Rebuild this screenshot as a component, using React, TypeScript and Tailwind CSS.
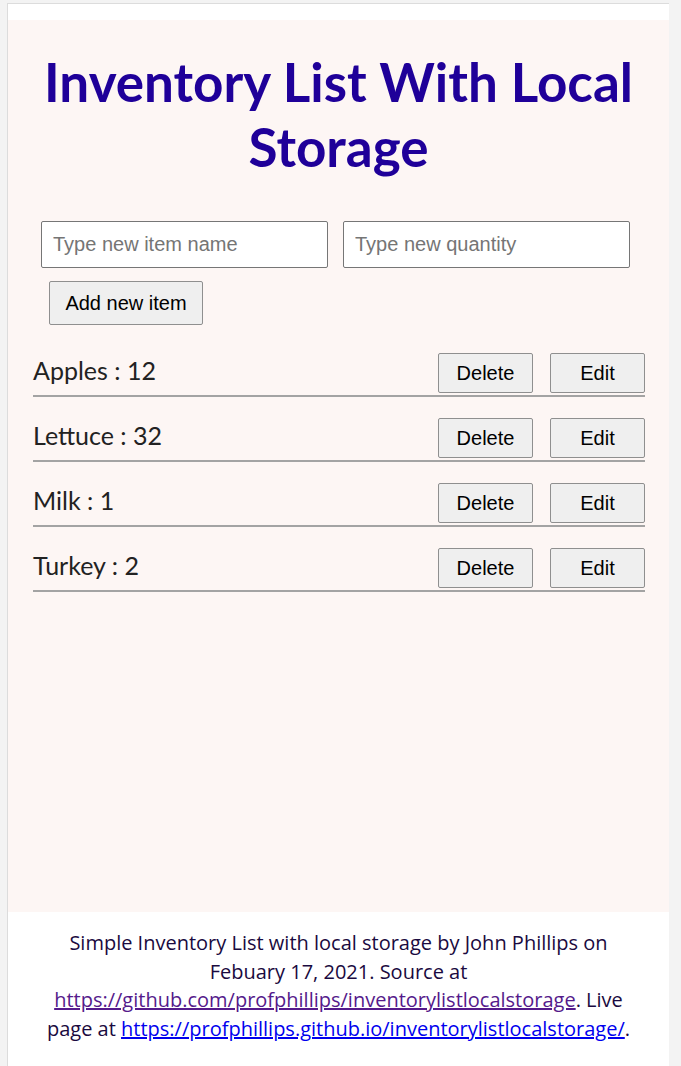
import React from "react";

const items = [
  { name: "Apples", qty: 12 },
  { name: "Lettuce", qty: 32 },
  { name: "Milk", qty: 1 },
  { name: "Turkey", qty: 2 },
];

export default function App() {
  return (
    <div className="w-[681px] h-[1066px] bg-[#f3f3f3] pt-[3px] pl-[7px] pr-[12px] overflow-hidden">
      <div className="h-[1063px] bg-white border-t border-l border-[#dcdcdc] pt-[16px]">
        <main className="h-[892px] bg-[#fdf6f4] pt-[29px]">
          <h1
            className="text-center text-[#1f0099] font-bold text-[53px] leading-[65px] px-[10px]"
            style={{ fontFamily: 'Lato, "Open Sans", sans-serif' }}
          >
            Inventory List With Local Storage
          </h1>
          <div className="mt-[42px] pl-[33px]" style={{ fontFamily: '"Liberation Sans", Arial, sans-serif' }}>
            <div className="flex gap-[15px]">
              <input
                className="w-[287px] h-[47px] bg-white border border-[#767676] rounded-[2px] px-[11px] text-[20px] placeholder:text-[#757575] outline-none"
                placeholder="Type new item name"
              />
              <input
                className="w-[287px] h-[47px] bg-white border border-[#767676] rounded-[2px] px-[11px] text-[20px] placeholder:text-[#757575] outline-none"
                placeholder="Type new quantity"
              />
            </div>
            <button className="mt-[13px] ml-[8px] w-[154px] h-[44px] bg-[#efefef] border border-[#8f8f8f] rounded-[2px] text-[20px] text-black">
              Add new item
            </button>
          </div>
          <ul className="mt-[17px] px-[25px] pr-[24px]">
            {items.map((it) => (
              <li key={it.name} className="flex items-center justify-between h-[65px] pt-[1px]">
                <div className="flex flex-col w-full">
                  <div className="flex items-center justify-between h-[40px]">
                    <span
                      className="text-[25px] text-[#222] pb-[4px]"
                      style={{ fontFamily: 'Lato, "Open Sans", sans-serif' }}
                    >
                      {it.name} : {it.qty}
                    </span>
                    <div className="flex gap-[17px]" style={{ fontFamily: '"Liberation Sans", Arial, sans-serif' }}>
                      <button className="w-[95px] h-[40px] bg-[#efefef] border border-[#8f8f8f] rounded-[2px] text-[20px] text-black">
                        Delete
                      </button>
                      <button className="w-[95px] h-[40px] bg-[#efefef] border border-[#8f8f8f] rounded-[2px] text-[20px] text-black">
                        Edit
                      </button>
                    </div>
                  </div>
                  <div className="mt-[2px] h-[2px] bg-[#a3a3a3]" />
                </div>
              </li>
            ))}
          </ul>
        </main>
        <footer
          className="text-center text-[20px] leading-[28.5px] text-[#1a0a40] pt-[17px] px-[22px]"
          style={{ fontFamily: '"Open Sans", "Noto Sans", sans-serif' }}
        >
          Simple Inventory List with local storage by John Phillips on Febuary 17, 2021. Source at{" "}
          <a href="#" className="underline text-[#551a8b]">https://github.com/profphillips/inventorylistlocalstorage</a>. Live
          page at{" "}
          <a href="#" className="underline text-[#0000ee]">https://profphillips.github.io/inventorylistlocalstorage/</a>.
        </footer>
      </div>
    </div>
  );
}
